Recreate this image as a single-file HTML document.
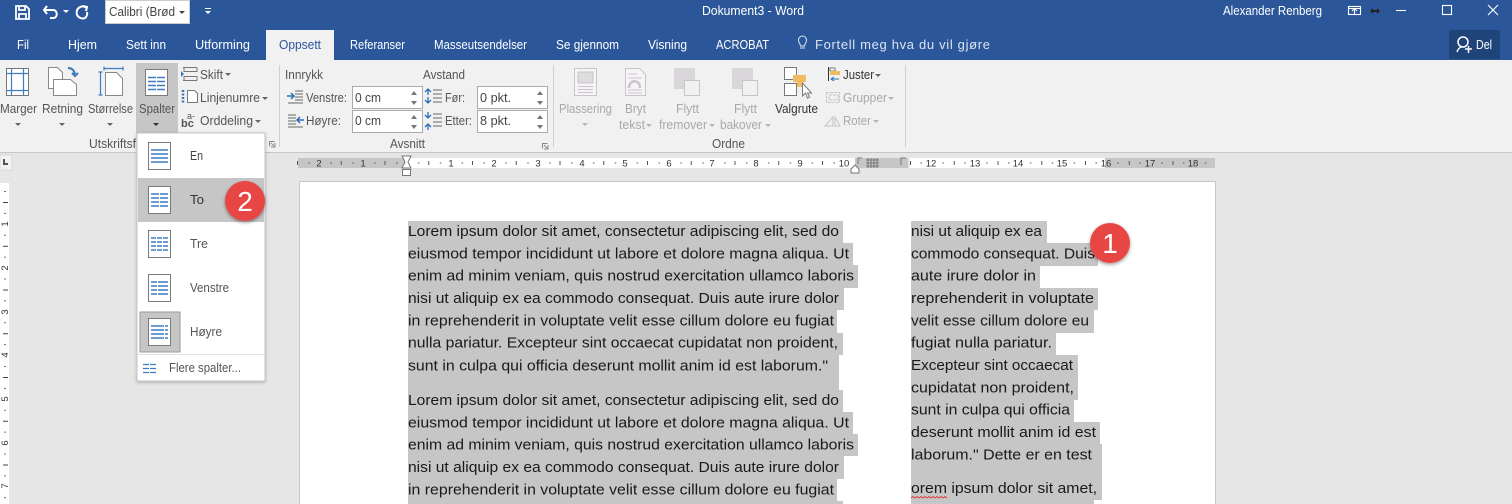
<!DOCTYPE html>
<html><head><meta charset="utf-8"><title>Dokument3 - Word</title>
<style>
html,body{margin:0;padding:0;background:#e6e6e6;overflow:hidden}
svg{display:block}
text{font-family:"Liberation Sans",sans-serif;font-size:12.5px;fill:#444}
.w text,text.w{fill:#fff}
.d text{fill:#a9a9a9}
.doc text{font-size:15.2px;fill:#1a1a1a}
.r text{font-size:9.5px;fill:#333}
.m text{fill:#555}
</style></head><body>
<svg width="1512" height="504" viewBox="0 0 1512 504" xmlns="http://www.w3.org/2000/svg">
<defs><filter id="s" x="-30%" y="-30%" width="160%" height="160%"><feDropShadow dx="0" dy="1.5" stdDeviation="1.8" flood-color="#000" flood-opacity=".4"/></filter>
<filter id="ms" x="-10%" y="-5%" width="120%" height="110%"><feDropShadow dx="0" dy="1" stdDeviation="1.5" flood-color="#000" flood-opacity=".25"/></filter>
<g id="arr"><path d="M-3 0h6l-3 3z" fill="#666"/></g>
<g id="arrd"><path d="M-3 0h6l-3 3z" fill="#b5b5b5"/></g>
<g id="spin"><path d="M-3 3h6l-3-4zM-3 9h6l-3 4z" fill="#777"/></g>
</defs>
<rect width="1512" height="504" fill="#e6e6e6"/>
<!-- title bar -->
<rect width="1512" height="60" fill="#2b579a"/>
<g fill="none" stroke="#fff" stroke-width="1.8">
<path d="M16 6h10l3 3v10H16z"/><path d="M19 6v4h6V6M19 19v-5h7v5"/>
<path d="M47 6l-3 4 3 4M44 10h9c5 0 5 8 0 8h-3" stroke-width="2"/>
<path d="M87 6l4 1-1 4M90 7.500a6 6 0 1 0-1 10.500a6 6 0 0 0 2-6" stroke-width="2" transform="translate(-4 0)"/>
</g>
<path d="M63 10h6l-3 3z M205 11h6l-3 3z" fill="#fff"/><path d="M205 8h6v1h-6z" fill="#fff"/>
<rect x="105.500" y="0.500" width="84" height="23" fill="#fff" stroke="#ccc"/>
<text x="109" y="16" textLength="66" lengthAdjust="spacingAndGlyphs" fill="#444">Calibri (Brød</text>
<path d="M179 11h6l-3 3z" fill="#444"/>
<text class="w" x="702" y="15" textLength="102" lengthAdjust="spacingAndGlyphs">Dokument3 - Word</text>
<text class="w" x="1223" y="15" textLength="99" lengthAdjust="spacingAndGlyphs">Alexander Renberg</text>
<g fill="none" stroke="#fff" stroke-width="1.100">
<rect x="1348.500" y="6.500" width="12" height="8"/><path d="M1348 8.500h13M1354.500 14v-5M1352 11l2.500-2.500 2.500 2.500"/>
<path d="M1396 10.500h10"/><rect x="1442.500" y="5.500" width="9" height="9"/><path d="M1488 5l10 10M1498 5l-10 10"/>
</g>
<path d="M1370 11l3-3v2h4V8l3 3-3 3v-2h-4v2z" fill="#222"/>
<!-- tabs -->
<rect x="266" y="30" width="68" height="30" fill="#f1f1f1"/>
<g class="w">
<text x="17" y="49" textLength="12" lengthAdjust="spacingAndGlyphs">Fil</text>
<text x="68" y="49" textLength="29" lengthAdjust="spacingAndGlyphs">Hjem</text>
<text x="126" y="49" textLength="40" lengthAdjust="spacingAndGlyphs">Sett inn</text>
<text x="195" y="49" textLength="55" lengthAdjust="spacingAndGlyphs">Utforming</text>
<text x="350" y="49" textLength="55" lengthAdjust="spacingAndGlyphs">Referanser</text>
<text x="434" y="49" textLength="93" lengthAdjust="spacingAndGlyphs">Masseutsendelser</text>
<text x="556" y="49" textLength="63" lengthAdjust="spacingAndGlyphs">Se gjennom</text>
<text x="648" y="49" textLength="39" lengthAdjust="spacingAndGlyphs">Visning</text>
<text x="716" y="49" textLength="53" lengthAdjust="spacingAndGlyphs">ACROBAT</text>
<text x="815" y="49" textLength="175" style="fill:#dbe4f1;font-size:13px">Fortell meg hva du vil gjøre</text>
</g>
<text x="279" y="49" textLength="42" lengthAdjust="spacingAndGlyphs" style="fill:#2b579a">Oppsett</text>
<path d="M800 48h5M800.500 46c0-2-2-3-2-6a4 4 0 0 1 8 0c0 3-2 4-2 6z" fill="none" stroke="#dbe4f1"/>
<rect x="1449" y="30" width="51" height="29" fill="#1f447a"/>
<g fill="none" stroke="#fff" stroke-width="1.500"><circle cx="1463" cy="42" r="5"/><path d="M1457 52c1-3 3-5 5-5M1465 49h7M1468.500 46v7"/></g>
<text class="w" x="1476" y="49" textLength="16" lengthAdjust="spacingAndGlyphs">Del</text>
<!-- ribbon -->
<rect y="60" width="1512" height="92" fill="#f1f1f1"/>
<rect y="152" width="1512" height="1" fill="#c6c6c6"/>
<rect x="136" y="63" width="42" height="70" fill="#c6c6c6"/>
<g fill="none" stroke="#d0d0d0"><path d="M279.500 65v82M553.500 65v82M905.500 65v82"/></g>
<!-- margin icon -->
<g fill="none">
<rect x="6.500" y="68.500" width="22" height="27" fill="#fff" stroke="#777"/><path d="M11.500 69v26M23.500 69v26M7 73.500h21M7 90.500h21" stroke="#3f7cc4" stroke-width="1.200"/>
<path d="M48.500 67.500h9l5 5v16h-14z" fill="#fff" stroke="#888"/><path d="M53.500 79.500h17l6 5v11h-23z" fill="#fff" stroke="#888"/>
<path d="M68 68c4 0 6 2 7 6M72 73l3 3 3-3" stroke="#3a78ba" stroke-width="2"/>
<path d="M104 68.500h19M104 66.500v4M123 66.500v4M100.500 72v23M98.500 72h4M98.500 95h4" stroke="#3f7cc4" stroke-width="1.200"/>
<path d="M105.500 72.500h11l6 6v17h-17z" fill="#fff" stroke="#888"/>
<rect x="145.500" y="69.500" width="22" height="26" fill="#fff" stroke="#7a7a7a"/><path d="M148 77.500h17M148 81.500h17M148 85.500h17M148 89.500h17" stroke="#3f7cc4" stroke-width="1.400"/><path d="M156.500 76v15" stroke="#fff"/>
</g>
<g class="m">
<text x="0" y="113" textLength="37" lengthAdjust="spacingAndGlyphs">Marger</text>
<text x="42" y="113" textLength="41" lengthAdjust="spacingAndGlyphs">Retning</text>
<text x="88" y="113" textLength="45" lengthAdjust="spacingAndGlyphs">Størrelse</text>
<text x="139" y="113" textLength="36" lengthAdjust="spacingAndGlyphs">Spalter</text>
<text x="89" y="148" textLength="47" lengthAdjust="spacingAndGlyphs">Utskriftsf</text>
<text x="200" y="79" textLength="23" lengthAdjust="spacingAndGlyphs">Skift</text>
<text x="200" y="102" textLength="60" lengthAdjust="spacingAndGlyphs">Linjenumre</text>
<text x="200" y="125" textLength="53" lengthAdjust="spacingAndGlyphs">Orddeling</text>
<text x="285" y="79" textLength="38" lengthAdjust="spacingAndGlyphs">Innrykk</text>
<text x="423" y="79" textLength="42" lengthAdjust="spacingAndGlyphs">Avstand</text>
<text x="306" y="102" textLength="41" lengthAdjust="spacingAndGlyphs">Venstre:</text>
<text x="306" y="125" textLength="35" lengthAdjust="spacingAndGlyphs">Høyre:</text>
<text x="445" y="102" textLength="20" lengthAdjust="spacingAndGlyphs">Før:</text>
<text x="445" y="125" textLength="27" lengthAdjust="spacingAndGlyphs">Etter:</text>
<text x="390" y="148" textLength="35" lengthAdjust="spacingAndGlyphs">Avsnitt</text>
<text x="712" y="148" textLength="33" lengthAdjust="spacingAndGlyphs">Ordne</text>
<text x="775" y="113" textLength="43" lengthAdjust="spacingAndGlyphs" style="fill:#333">Valgrute</text>
<text x="843" y="79" textLength="31" lengthAdjust="spacingAndGlyphs" style="fill:#333">Juster</text>
</g>
<use href="#arr" x="18" y="123"/><use href="#arr" x="62" y="123"/><use href="#arr" x="110" y="123"/>
<path d="M153 123h6l-3 3z" fill="#333"/>
<use href="#arr" x="228" y="73"/><use href="#arr" x="265" y="97"/><use href="#arr" x="258" y="120"/><use href="#arr" x="878" y="74"/>
<!-- small icons -->
<g fill="none" stroke="#777">
<path d="M183 67.500h14M183 80.500h14M184 67.500v4h13v-4M184 80.500v-4h13v4"/>
<path d="M187.500 90.500h7l3 3v9h-10z" fill="#fff"/>
<path d="M269.500 146.500v-5h5M271 143l3 3M275 143v4h-4" stroke="#888"/>
<path d="M542.500 148.500v-5h5M544 145l3 3M548 145v4h-4" stroke="#888"/>
</g>
<path d="M181 71l3 3-3 3z" fill="#3a78ba"/>
<path d="M183 90v13" stroke="#3a78ba" stroke-dasharray="2 1.500" stroke-width="2.500" fill="none"/>
<text x="187" y="119" style="font-size:9px;fill:#555">a-</text>
<text x="181" y="127" style="font-size:11px;font-weight:bold;fill:#555">bc</text>
<!-- para icons -->
<g fill="none" stroke="#666">
<path d="M295 91h8M295 94h8M295 97h8M295 100h8M288 103h15M288 115h8M288 118h8M288 121h8M288 124h8M288 127h15"/>
<path d="M287 96h7M291 93l3 3-3 3" stroke="#2a6ebb" stroke-width="1.500"/>
<path d="M304 120h-7M300 117l-3 3 3 3" stroke="#2a6ebb" stroke-width="1.500"/>
<path d="M433 90h9M433 94h9M433 98h9M433 102h9M433 114h9M433 118h9M433 122h9M433 126h9"/>
<path d="M428 89v6M425 92l3-3 3 3M428 97v6M425 100l3 3 3-3M428 112v6M425 115l3 3 3-3M428 124v6M425 127l3-3 3 3" stroke="#2a6ebb" stroke-width="1.300"/>
</g>
<g fill="#fff" stroke="#ababab">
<rect x="352.500" y="86.500" width="70" height="22"/><rect x="352.500" y="110.500" width="70" height="22"/>
<rect x="477.500" y="86.500" width="70" height="22"/><rect x="477.500" y="110.500" width="70" height="22"/>
</g>
<use href="#spin" x="414" y="92"/><use href="#spin" x="414" y="116"/><use href="#spin" x="540" y="92"/><use href="#spin" x="540" y="116"/>
<g style="fill:#444">
<text x="355" y="102" textLength="26" lengthAdjust="spacingAndGlyphs">0 cm</text>
<text x="355" y="125" textLength="26" lengthAdjust="spacingAndGlyphs">0 cm</text>
<text x="480" y="102" textLength="31" lengthAdjust="spacingAndGlyphs">0 pkt.</text>
<text x="480" y="125" textLength="31" lengthAdjust="spacingAndGlyphs">8 pkt.</text>
</g>
<!-- Ordne icons -->
<g fill="none" stroke="#c9c4c9">
<rect x="574.500" y="68.500" width="22" height="27" fill="#f6f4f6"/><rect x="578" y="72" width="15" height="11" fill="#ddd"/><path d="M578 86.500h15M578 89.500h15M578 92.500h15"/>
<path d="M625.500 68.500h14l6 6v21h-20z" fill="#f6f4f6"/><path d="M628 74h9M628 78h14M628 90h14M628 93h14"/><path d="M629 88c0-9 11-9 11 0" stroke-width="2.500"/>
<rect x="674" y="68" width="21" height="21" fill="#d9d6d9" stroke="none"/><rect x="684.500" y="80.500" width="15" height="15" fill="#f1f1f1"/>
<rect x="732" y="68" width="21" height="21" fill="#d9d6d9" stroke="none"/><rect x="742.500" y="80.500" width="15" height="15" fill="#f1f1f1"/>
<path d="M826.500 92.500h13v10h-13zM829 95h9v5h-9z" stroke-dasharray="3 1"/><path d="M825 126l8-9v9zM835 126v-9l5 9z"/>
</g>
<g fill="none" stroke="#777">
<rect x="784.500" y="67.500" width="12" height="12" fill="#fff"/><rect x="784.500" y="83.500" width="12" height="12" fill="#fff"/>
<rect x="793" y="75" width="13" height="7" fill="#f0bc62" stroke="none"/><rect x="797" y="82" width="5" height="5" fill="#f0bc62" stroke="none"/>
<path d="M802.500 83v13l3-3 2 5 2-1-2-4h4z" fill="#fff"/>
<path d="M828.500 67v14" stroke="#333"/><path d="M830 68h5v3h-5z" fill="#fff"/>
</g>
<rect x="830" y="71" width="10" height="4" fill="#f0bc62"/><path d="M839 79h-8M834 77l-3 2 3 2" stroke="#2a6ebb" fill="none"/>
<g class="d">
<text x="559" y="113" textLength="53" lengthAdjust="spacingAndGlyphs">Plassering</text>
<text x="625" y="113" textLength="21" lengthAdjust="spacingAndGlyphs">Bryt</text>
<text x="619" y="129" textLength="26" lengthAdjust="spacingAndGlyphs">tekst</text>
<text x="676" y="113" textLength="23" lengthAdjust="spacingAndGlyphs">Flytt</text>
<text x="659" y="129" textLength="48" lengthAdjust="spacingAndGlyphs">fremover</text>
<text x="734" y="113" textLength="23" lengthAdjust="spacingAndGlyphs">Flytt</text>
<text x="720" y="129" textLength="42" lengthAdjust="spacingAndGlyphs">bakover</text>
<text x="843" y="102" textLength="44" lengthAdjust="spacingAndGlyphs">Grupper</text>
<text x="843" y="125" textLength="28" lengthAdjust="spacingAndGlyphs">Roter</text>
</g>
<use href="#arrd" x="585" y="123"/><use href="#arrd" x="649" y="124"/><use href="#arrd" x="712" y="124"/><use href="#arrd" x="768" y="124"/><use href="#arrd" x="891" y="97"/><use href="#arrd" x="876" y="120"/>
<!-- rulers -->
<rect x="298" y="158" width="109" height="10" fill="#c6c6c6"/>
<rect x="407" y="158" width="448" height="10" fill="#fff"/>
<rect x="855" y="158" width="53" height="10" fill="#c6c6c6"/>
<rect x="910" y="158" width="195" height="10" fill="#fff"/>
<rect x="1105" y="158" width="110" height="10" fill="#c6c6c6"/>
<rect x="0" y="155" width="12" height="15" fill="#f3f3f3" stroke="#d9d9d9"/>
<path d="M3 159v6h5v-2H5v-4z" fill="#555"/>
<path d="M298 163H855M910 163H1215" stroke="#555" stroke-width="1" stroke-dasharray="1.500 20.375" stroke-dashoffset="-10.500" fill="none"/>
<path d="M297 163H855M910 163H1215" stroke="#555" stroke-width="4" stroke-dasharray="1 42.750" fill="none"/>
<g class="r" text-anchor="middle">
<text x="319" y="166.500">2</text><text x="363" y="166.500">1</text><text x="451" y="166.500">1</text><text x="494" y="166.500">2</text><text x="538" y="166.500">3</text><text x="582" y="166.500">4</text><text x="625" y="166.500">5</text><text x="669" y="166.500">6</text><text x="712" y="166.500">7</text><text x="756" y="166.500">8</text><text x="800" y="166.500">9</text><text x="844" y="166.500">10</text>
<text x="931" y="166.500">12</text><text x="975" y="166.500">13</text><text x="1018" y="166.500">14</text><text x="1062" y="166.500">15</text><text x="1106" y="166.500">16</text><text x="1150" y="166.500">17</text><text x="1193" y="166.500">18</text>
</g>
<rect x="298" y="158" width="0" height="0" fill="none"/>
<path d="M402 156h9l-3 6 3 6h-9l3-6z" fill="#fff" stroke="#777"/><rect x="402.500" y="169.500" width="8" height="6" fill="#fff" stroke="#777"/>
<path d="M851 173v-4l4-4 4 4v4z" fill="#fff" stroke="#777"/><path d="M858 164v-6h4M901 165v-7h5" fill="none" stroke="#777"/>
<path d="M868 158v10M871 158v10M874 158v10M877 158v10M866 160h13M866 163h13M866 166h13" stroke="#666" stroke-width=".8"/>
<rect x="0" y="183" width="9" height="321" fill="#fff"/>
<path d="M5 180V504" stroke="#444" stroke-width="1.500" stroke-dasharray="1 20.875" stroke-dashoffset="-11" fill="none"/>
<path d="M5.500 180V504" stroke="#444" stroke-width="5" stroke-dasharray="1 42.750" stroke-dashoffset="-22" fill="none"/>
<g class="r" text-anchor="middle">
<text transform="translate(8 224) rotate(-90)">1</text><text transform="translate(8 268) rotate(-90)">2</text><text transform="translate(8 312) rotate(-90)">3</text><text transform="translate(8 355) rotate(-90)">4</text><text transform="translate(8 399) rotate(-90)">5</text><text transform="translate(8 443) rotate(-90)">6</text><text transform="translate(8 486) rotate(-90)">7</text>
</g>
<!-- page -->
<rect x="299.500" y="181.500" width="916" height="330" fill="#fff" stroke="#c6c6c6"/>
<!-- highlights -->
<g fill="#c6c6c6">
<rect x="408" y="221" width="435" height="22"/><rect x="408" y="243" width="445" height="23"/><rect x="408" y="265" width="450" height="23"/><rect x="408" y="288" width="436" height="22"/><rect x="408" y="310" width="429" height="23"/><rect x="408" y="333" width="435" height="22"/><rect x="408" y="355" width="431" height="35"/>
<rect x="408" y="390" width="435" height="22"/><rect x="408" y="412" width="445" height="22"/><rect x="408" y="434" width="450" height="22"/><rect x="408" y="456" width="436" height="23"/><rect x="408" y="479" width="429" height="22"/><rect x="408" y="501" width="435" height="3"/>
<rect x="911" y="221" width="136" height="22"/><rect x="911" y="243" width="187" height="23"/><rect x="911" y="265" width="129" height="23"/><rect x="911" y="288" width="187" height="22"/><rect x="911" y="310" width="183" height="23"/><rect x="911" y="333" width="145" height="22"/><rect x="911" y="355" width="167" height="22"/><rect x="911" y="377" width="167" height="23"/><rect x="911" y="400" width="163" height="22"/><rect x="911" y="422" width="189" height="22"/><rect x="911" y="444" width="191" height="34"/><rect x="911" y="478" width="191" height="22"/><rect x="911" y="500" width="183" height="4"/>
</g>
<g class="doc">
<text x="408" y="236" textLength="431" lengthAdjust="spacingAndGlyphs">Lorem ipsum dolor sit amet, consectetur adipiscing elit, sed do</text>
<text x="408" y="258.300" textLength="441" lengthAdjust="spacingAndGlyphs">eiusmod tempor incididunt ut labore et dolore magna aliqua. Ut</text>
<text x="408" y="280.700" textLength="446" lengthAdjust="spacingAndGlyphs">enim ad minim veniam, quis nostrud exercitation ullamco laboris</text>
<text x="408" y="303" textLength="431" lengthAdjust="spacingAndGlyphs">nisi ut aliquip ex ea commodo consequat. Duis aute irure dolor</text>
<text x="408" y="325.400" textLength="426" lengthAdjust="spacingAndGlyphs">in reprehenderit in voluptate velit esse cillum dolore eu fugiat</text>
<text x="408" y="347.700" textLength="430" lengthAdjust="spacingAndGlyphs">nulla pariatur. Excepteur sint occaecat cupidatat non proident,</text>
<text x="408" y="370.500" textLength="420" lengthAdjust="spacingAndGlyphs">sunt in culpa qui officia deserunt mollit anim id est laborum."</text>
<text x="408" y="405" textLength="431" lengthAdjust="spacingAndGlyphs">Lorem ipsum dolor sit amet, consectetur adipiscing elit, sed do</text>
<text x="408" y="427.300" textLength="441" lengthAdjust="spacingAndGlyphs">eiusmod tempor incididunt ut labore et dolore magna aliqua. Ut</text>
<text x="408" y="449.700" textLength="446" lengthAdjust="spacingAndGlyphs">enim ad minim veniam, quis nostrud exercitation ullamco laboris</text>
<text x="408" y="472" textLength="431" lengthAdjust="spacingAndGlyphs">nisi ut aliquip ex ea commodo consequat. Duis aute irure dolor</text>
<text x="408" y="494.400" textLength="426" lengthAdjust="spacingAndGlyphs">in reprehenderit in voluptate velit esse cillum dolore eu fugiat</text>
<text x="911" y="236" textLength="131" lengthAdjust="spacingAndGlyphs">nisi ut aliquip ex ea</text>
<text x="911" y="258.300" textLength="184" lengthAdjust="spacingAndGlyphs">commodo consequat. Duis</text>
<text x="911" y="280.700" textLength="125" lengthAdjust="spacingAndGlyphs">aute irure dolor in</text>
<text x="911" y="303" textLength="183" lengthAdjust="spacingAndGlyphs">reprehenderit in voluptate</text>
<text x="911" y="325.400" textLength="178" lengthAdjust="spacingAndGlyphs">velit esse cillum dolore eu</text>
<text x="911" y="347.700" textLength="141" lengthAdjust="spacingAndGlyphs">fugiat nulla pariatur.</text>
<text x="911" y="370" textLength="162" lengthAdjust="spacingAndGlyphs">Excepteur sint occaecat</text>
<text x="911" y="392.400" textLength="163" lengthAdjust="spacingAndGlyphs">cupidatat non proident,</text>
<text x="911" y="414.700" textLength="159" lengthAdjust="spacingAndGlyphs">sunt in culpa qui officia</text>
<text x="911" y="437" textLength="185" lengthAdjust="spacingAndGlyphs">deserunt mollit anim id est</text>
<text x="911" y="459.400" textLength="181" lengthAdjust="spacingAndGlyphs">laborum." Dette er en test</text>
<text x="911" y="493" textLength="186" lengthAdjust="spacingAndGlyphs">orem ipsum dolor sit amet,</text>
</g>
<path d="M911 498l2-1.500 2 1.500 2-1.500 2 1.500 2-1.500 2 1.500 2-1.500 2 1.500 2-1.500 2 1.500 2-1.500 2 1.500 2-1.500 2 1.500 2-1.500 2 1.500 2-1.500 2 1.500" fill="none" stroke="#e03030" stroke-width=".8"/>
<!-- menu -->
<rect x="137" y="133" width="128" height="248" fill="#fff" stroke="#c6c6c6" filter="url(#ms)"/>
<rect x="138" y="178" width="126" height="44" fill="#c6c6c6"/>
<rect x="140" y="312" width="40" height="40" fill="#c6c6c6" stroke="#9a9a9a"/>
<path d="M138 354.500h126" stroke="#e1e1e1"/>
<g fill="#fff" stroke="#7a7a7a">
<rect x="148.500" y="142.500" width="22" height="27"/><rect x="148.500" y="186.500" width="22" height="27"/><rect x="148.500" y="230.500" width="22" height="27"/><rect x="148.500" y="274.500" width="22" height="27"/><rect x="148.500" y="318.500" width="22" height="27"/>
</g>
<g fill="none" stroke="#3f7cc4" stroke-width="1.400">
<path d="M151 150h17M151 154h17M151 158h17M151 162h17"/>
<path d="M151 194h17M151 198h17M151 202h17M151 206h17"/>
<path d="M151 238h17M151 242h17M151 246h17M151 250h17"/>
<path d="M151 282h17M151 286h17M151 290h17M151 294h17"/>
<path d="M151 326h17M151 330h17M151 334h17M151 338h17"/>
<path d="M143 364.500h13M143 368.500h13M143 372.500h13" stroke-width="1.200"/>
</g>
<g stroke="#fff"><path d="M159.500 192v16"/><path d="M156.500 236v16M162.500 236v16"/><path d="M157.500 280v16"/><path d="M164.500 324v16"/><path d="M149.500 363v11"/></g>
<g class="m">
<text x="190" y="160" textLength="13" lengthAdjust="spacingAndGlyphs" style="fill:#444">En</text>
<text x="190" y="204" textLength="14" lengthAdjust="spacingAndGlyphs" style="fill:#333">To</text>
<text x="190" y="248" textLength="18" lengthAdjust="spacingAndGlyphs">Tre</text>
<text x="190" y="292" textLength="39" lengthAdjust="spacingAndGlyphs">Venstre</text>
<text x="190" y="336" textLength="32" lengthAdjust="spacingAndGlyphs">Høyre</text>
<text x="169" y="372" textLength="72" lengthAdjust="spacingAndGlyphs">Flere spalter...</text>
</g>
<!-- badges -->
<circle cx="245" cy="201" r="20" fill="#e84545" filter="url(#s)"/>
<circle cx="1110" cy="243" r="20" fill="#e84545" filter="url(#s)"/>
<text x="245" y="211" text-anchor="middle" style="font-size:28px;fill:#fff">2</text>
<text x="1110" y="253" text-anchor="middle" style="font-size:28px;fill:#fff">1</text>
</svg>
</body></html>
